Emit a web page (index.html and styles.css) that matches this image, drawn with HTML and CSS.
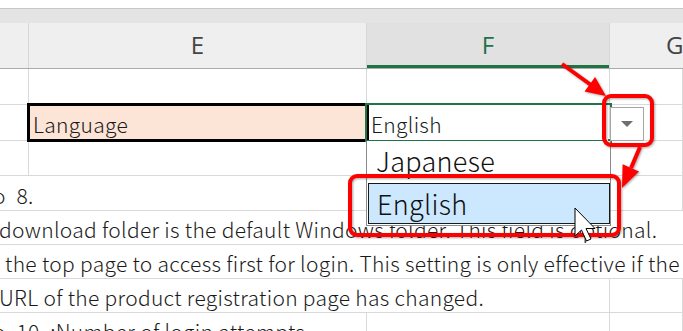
FILE: index.html
```html
<!DOCTYPE html>
<html>
<head>
<meta charset="utf-8">
<link rel="stylesheet" href="styles.css">
</head>
<body>
<div class="sheet">
  <div class="topgap"></div>
  <div class="band"></div>
  <div class="hdr">
    <div class="hc"></div>
    <div class="hc">E</div>
    <div class="hc hsel">F</div>
    <div class="hc hg">G</div>
  </div>

  <div class="row h36">
    <div class="c"></div><div class="c"></div><div class="c"></div><div class="c"></div>
  </div>
  <div class="row h36">
    <div class="c"></div>
    <div class="c lang"><span class="ctext">Language</span></div>
    <div class="c eng"><span class="ctext">English</span><i class="handle"></i></div>
    <div class="c"></div>
  </div>
  <div class="row h35">
    <div class="c"></div><div class="c"></div><div class="c"></div><div class="c"></div>
  </div>
  <div class="row h35">
    <div class="c span2 txt"><span class="t1">o&ensp;8.</span></div>
    <div class="c"></div><div class="c"></div>
  </div>
  <div class="row h34">
    <div class="c spanall txt"><span class="t2">download folder is the default Windows folder. This field is optional.</span></div>
  </div>
  <div class="row h34">
    <div class="c spanall txt"><span class="t3">the top page to access first for login. This setting is only effective if the</span></div>
  </div>
  <div class="row h34">
    <div class="c span3 txt"><span class="t4">URL of the product registration page has changed.</span></div>
    <div class="c"></div>
  </div>
  <div class="row h34">
    <div class="c span2 txt"><span class="t5">o&ensp;10. :Number of login attempts</span></div>
    <div class="c"></div><div class="c"></div>
  </div>

  <div class="ddbtn"><i class="tri"></i></div>
  <div class="ddlist">
    <div class="item">Japanese</div>
    <div class="item hot">English</div>
  </div>

  <svg class="marks" width="683" height="331" viewBox="0 0 683 331">
    <g class="red">
      <rect x="604" y="96" width="48" height="49" rx="7" ry="7" fill="none" stroke="#ff0000" stroke-width="4"/>
      <rect x="350" y="176" width="269" height="59" rx="7" ry="7" fill="none" stroke="#ff0000" stroke-width="4"/>
      <line x1="562" y1="64" x2="591" y2="85" stroke="#ff0000" stroke-width="4"/>
      <polygon points="606,96 584.5,91.5 595.1,76.9" fill="#ff0000"/>
      <line x1="640" y1="147" x2="631" y2="168" stroke="#ff0000" stroke-width="4"/>
      <polygon points="622,188 639,171.5 622.6,164.3" fill="#ff0000"/>
    </g>
    <path d="M575 208 L575 236 L581.5 230 L586.5 241 L591 239 L586 228.5 L595 228.5 Z" fill="#ffffff" stroke="#000000" stroke-width="1"/>
  </svg>
</div>
</body>
</html>
```

FILE: styles.css
```css
* { box-sizing: border-box; margin: 0; padding: 0; }
html, body { width: 683px; height: 331px; overflow: hidden; background: #fff; }
body { font-family: "Noto Sans CJK JP", "Noto Sans", sans-serif; color: #1a1a1a; }

.sheet { position: relative; width: 683px; height: 331px; overflow: hidden; }

.topgap { background: #fff; border-bottom: 1px solid #c8c8c8; height: 9px; }
.band { height: 14px; background: #e4e4e4; }

.hdr {
  display: grid;
  grid-template-columns: 29px 338px 243px 1fr;
  height: 46px;
  background: #efefef;
  border-bottom: 1px solid #ababab;
}
.hc {
  border-right: 1px solid #d6d6d6;
  display: flex; align-items: center; justify-content: center;
  font-family: "Open Sans", "Noto Sans", sans-serif;
  font-size: 24px; color: #444;
  padding-bottom: 2px;
}
.hsel { background: #e1e1e1; color: #217346; box-shadow: inset 0 -3px 0 #217346; }
.hg { justify-content: flex-start; padding-left: 56px; border-right: 0; }

.row {
  display: grid;
  grid-template-columns: 29px 338px 243px 1fr;
  border-bottom: 1px solid #d9d9d9;
}
.h36 { height: 36px; }
.h35 { height: 35px; }
.h34 { height: 34px; }

.c { border-right: 1px solid #d9d9d9; position: relative; }
.span2 { grid-column: 1 / 3; }
.span3 { grid-column: 1 / 4; }
.spanall { grid-column: 1 / -1; border-right: 0; }

.txt {
  overflow: hidden; white-space: nowrap;
  display: flex; align-items: flex-end;
  font-size: 21px; line-height: 26px; padding-bottom: 2px;
  font-weight: 300; letter-spacing: 0.3px;
}
.t1 { margin-left: -7px; }
.t2 { margin-left: -1px; }
.t3 { margin-left: 5px; }
.t4 { margin-left: -1px; }
.t5 { margin-left: -7px; }

.ctext { font-size: 21px; line-height: 26px; font-weight: 300; letter-spacing: 0.3px; }
.lang {
  background: #fce4d6;
  outline: 3px solid #000; outline-offset: -1px;
  display: flex; align-items: flex-end; padding: 0 0 3px 4px;
  z-index: 1;
}
.eng {
  outline: 2px solid #217346; outline-offset: 0px;
  display: flex; align-items: flex-end; padding: 0 0 3px 4px;
  z-index: 1;
}
.handle {
  position: absolute; right: -4px; bottom: -4px;
  width: 6px; height: 6px; background: #217346;
  border: 1px solid #fff;
}

.ddbtn {
  position: absolute; left: 610px; top: 107px;
  width: 34px; height: 34px;
  background: #fff; border: 1px solid #a6a6a6;
  display: flex; align-items: center; justify-content: center;
  z-index: 2;
}
.tri {
  width: 0; height: 0;
  border-left: 6px solid transparent; border-right: 6px solid transparent;
  border-top: 6px solid #6f6f6f;
}

.ddlist {
  position: absolute; left: 366px; top: 141px;
  width: 245px; height: 85px;
  background: #fff;
  border-left: 1px solid #8a8a8a; border-right: 1px solid #8a8a8a;
  border-bottom: 1px solid #8a8a8a;
  padding: 0 0 0 1px;
  z-index: 2;
}
.item {
  height: 42px; font-size: 27px; line-height: 40px;
  padding-left: 8px; color: #111; font-weight: 300; letter-spacing: 0.3px;
}
.hot { height: 41px; background: #cce8ff; border: 1px solid #1a1a1a; }

.marks { position: absolute; left: 0; top: 0; z-index: 3; }
.red { filter: drop-shadow(1px 1px 1px rgba(0,0,0,0.35)); }
```
